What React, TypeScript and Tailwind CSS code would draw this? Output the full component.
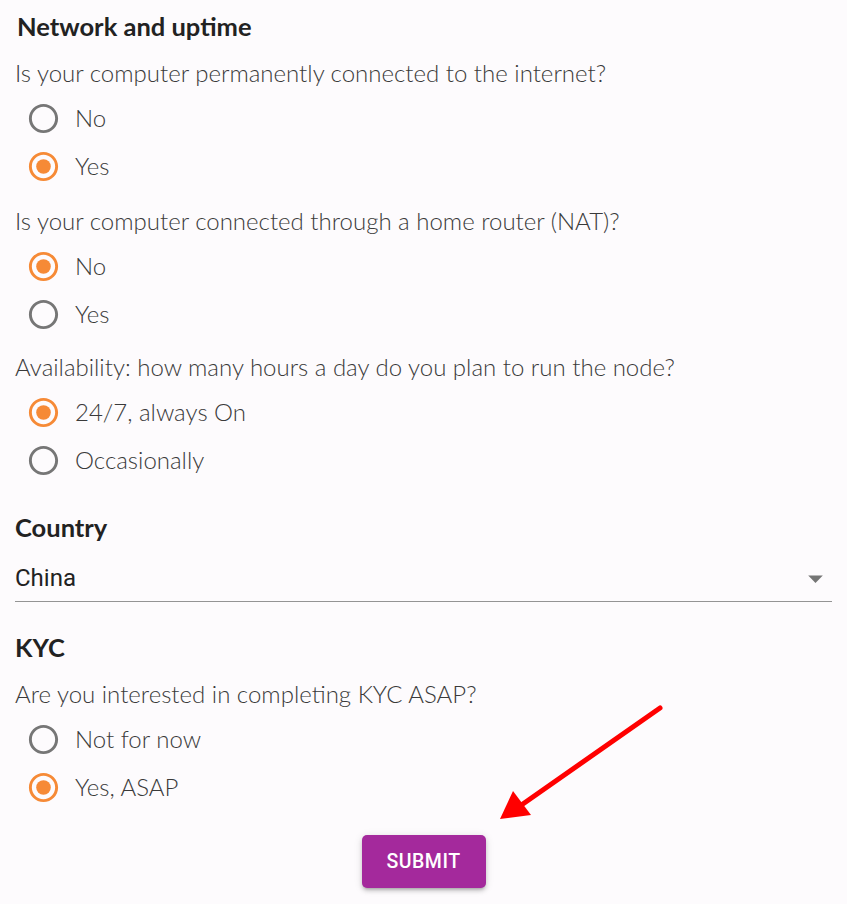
const sections = [
  {
    question: "Is your computer permanently connected to the internet?",
    options: ["No", "Yes"],
    selected: 1,
    gap: "",
  },
  {
    question: "Is your computer connected through a home router (NAT)?",
    options: ["No", "Yes"],
    selected: 0,
    gap: "mt-[10px]",
  },
  {
    question: "Availability: how many hours a day do you plan to run the node?",
    options: ["24/7, always On", "Occasionally"],
    selected: 0,
    gap: "mt-[8px]",
  },
];

function RadioIcon({ checked }: { checked: boolean }) {
  const color = checked ? "#f68a36" : "#767676";
  return (
    <svg viewBox="0 0 24 24" className="w-[35px] h-[35px] shrink-0" fill={color}>
      <path d="M12 2C6.48 2 2 6.48 2 12s4.48 10 10 10 10-4.48 10-10S17.52 2 12 2zm0 18c-4.42 0-8-3.58-8-8s3.58-8 8-8 8 3.58 8 8-3.58 8-8 8z" />
      {checked && <circle cx="12" cy="12" r="5" />}
    </svg>
  );
}

function RadioRow({ label, checked }: { label: string; checked: boolean }) {
  return (
    <div className="h-[48px] flex items-center pl-[11px]">
      <RadioIcon checked={checked} />
      <span className="ml-[14px] text-[24px] font-light text-[#3a3a3a]">{label}</span>
    </div>
  );
}

function Question({ text, className = "" }: { text: string; className?: string }) {
  return (
    <div
      className={`h-[42px] flex items-center text-[24px] font-light text-[#3a3a3a] ${className}`}
    >
      {text}
    </div>
  );
}

export default function App() {
  return (
    <div
      className="relative min-h-[904px] w-[847px] bg-[#fdfbfd] px-[15px] overflow-hidden"
      style={{ fontFamily: "Lato, 'Open Sans', sans-serif" }}
    >
      <h2 className="h-[52px] flex items-center pl-[2px] text-[25.5px] font-bold text-[#222]">
        Network and uptime
      </h2>

      {sections.map((s, i) => (
        <div key={i}>
          <Question text={s.question} className={s.gap} />
          {s.options.map((o, j) => (
            <RadioRow key={j} label={o} checked={j === s.selected} />
          ))}
        </div>
      ))}

      <h2 className="mt-[23px] h-[40px] flex items-center text-[25.5px] font-bold text-[#222]">
        Country
      </h2>
      <div className="h-[55px] pt-[8px] flex items-center justify-between border-b border-[#949494]">
        <span
          className="text-[24px] text-[#222]"
          style={{ fontFamily: "Roboto, sans-serif" }}
        >
          China
        </span>
        <svg viewBox="0 0 24 24" className="w-[35px] h-[35px] mr-[-1px]" fill="#757575">
          <path d="M7 10l5 5 5-5z" />
        </svg>
      </div>

      <h2 className="mt-[19px] h-[52px] flex items-center text-[25.5px] font-bold text-[#222]">
        KYC
      </h2>
      <Question text="Are you interested in completing KYC ASAP?" />
      <RadioRow label="Not for now" checked={false} />
      <RadioRow label="Yes, ASAP" checked={true} />

      <div className="flex justify-center mt-[24px]">
        <button
          className="w-[124px] h-[53px] rounded-[5px] bg-[#a4299c] text-white text-[19.5px] font-medium tracking-[0.5px] shadow-[0_3px_3px_-2px_rgba(0,0,0,0.2),0_3px_4px_0_rgba(0,0,0,0.14),0_1px_8px_0_rgba(0,0,0,0.12)]"
          style={{ fontFamily: "Roboto, sans-serif" }}
        >
          SUBMIT
        </button>
      </div>

      <svg
        className="absolute left-0 top-0 pointer-events-none"
        width="847"
        height="904"
        viewBox="0 0 847 904"
      >
        <line x1="660" y1="708" x2="520" y2="806" stroke="#f00" strokeWidth="5" strokeLinecap="round" />
        <polygon points="500,819 513,791 531,815" fill="#f00" />
      </svg>
    </div>
  );
}
